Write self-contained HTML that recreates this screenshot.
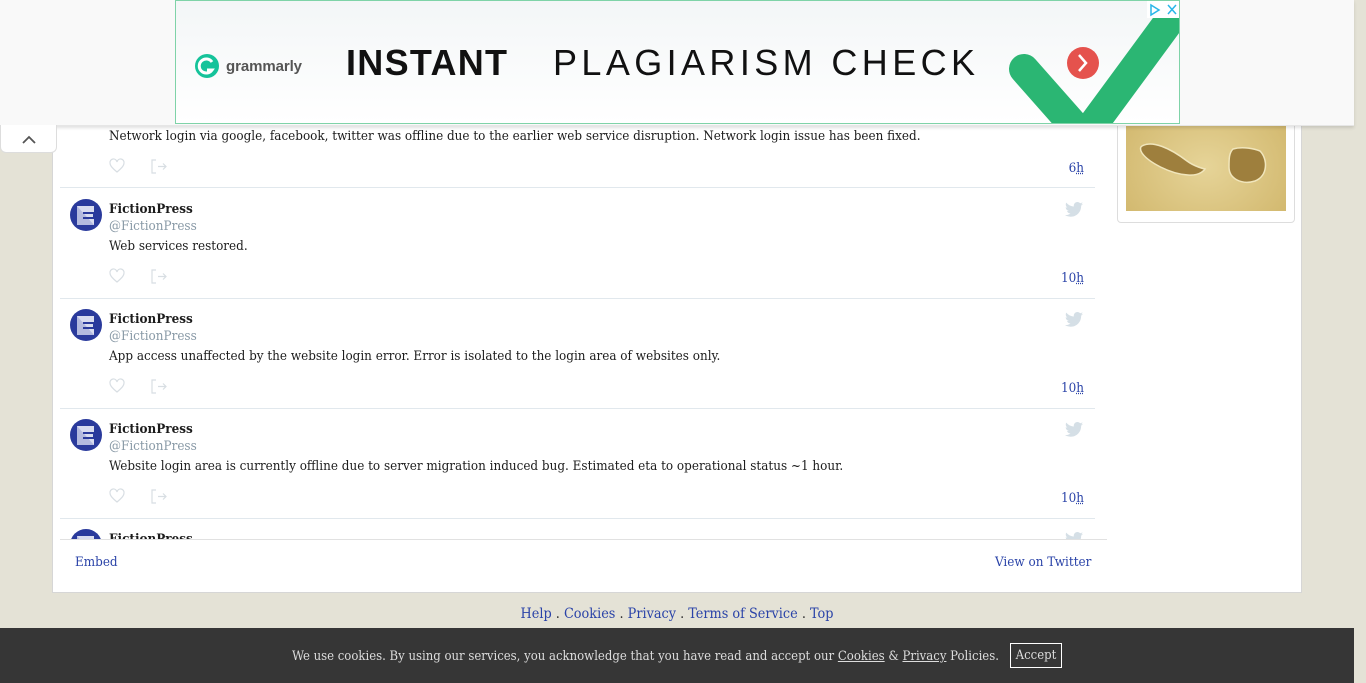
<!DOCTYPE html>
<html><head><meta charset="utf-8"><style>
*{box-sizing:border-box;margin:0;padding:0}
body{width:1366px;height:683px;overflow:hidden;background:#e4e2d6;font-family:"DejaVu Serif Condensed","DejaVu Serif",serif;font-size:13.35px;color:#1c1c1c;position:relative}
a{color:#2a43a8;text-decoration:none}
.panel{position:absolute;left:52px;top:0;width:1250px;height:593px;background:#fff;border:1px solid #d6d6d6;border-top:none}
.list{position:absolute;left:60px;top:0;width:1035px;height:539px;overflow:hidden}
.tw{position:absolute;left:0;width:1035px;height:110px;border-bottom:1px solid #e1e8ed}
.av{position:absolute;left:10px;top:10px;width:32px;height:32px}
.nm{position:absolute;left:49px;top:12px;font-weight:bold}
.hd{position:absolute;left:49px;top:30px;color:#8899a6}
.tx{position:absolute;left:49px;top:50px}
.ic{position:absolute;left:49px;top:79px}
.tm{position:absolute;right:11px;top:82px;color:#2a43a8}
.tm u{text-decoration:underline dotted}
.bird{position:absolute;right:12px;top:13px}
.sep{position:absolute;left:60px;top:539px;width:1047px;border-top:1px solid #e1e1e1}
.side{position:absolute;left:1117px;top:100px;width:178px;height:123px;border:1px solid #ddd;border-radius:0 0 4px 4px;background:#fff}
.img{position:absolute;left:8px;top:0;width:160px;height:110px;background:radial-gradient(ellipse at 50% 60%,#e6d498,#cfb468)}
.top{position:absolute;left:0;top:0;width:1354px;height:126px;background:#f9f9f9;box-shadow:0 2px 3px rgba(0,0,0,.12);border-bottom:1px solid #e6e6e6}
.ad{position:absolute;left:175px;top:0;width:1005px;height:124px;border:1px solid #7fd3a8;background:linear-gradient(#f3f6f7,#fff);overflow:hidden}
.tab{position:absolute;left:0;top:125px;width:57px;height:28px;background:#fff;border:1px solid #ddd;border-top:none;border-radius:0 0 6px 6px}
.foot{position:absolute;top:606px;left:0;width:1354px;text-align:center;font-size:14.3px;color:#333}
.ck{position:absolute;left:0;top:628px;width:1354px;height:55px;background:#363636;color:#ddd;font-size:13px}
</style></head><body>
<div class="panel"></div>
<div class="list">
<div class="tw" style="top:78px"><div class="tx" style="top:51px">Network login via google, facebook, twitter was offline due to the earlier web service disruption. Network login issue has been fixed.</div>
<div class="ic" style="top:80px"><svg width="70" height="16"><path d="M8 14 C2 9 1 7 1 5 a3.5 3.5 0 0 1 7-1 a3.5 3.5 0 0 1 7 1 c0 2-1 4-7 9z" fill="none" stroke="#d8dee3" stroke-width="1.2"/><path d="M47 2h-4v13h4M49 8.5h8M54 5.5l3 3-3 3" fill="none" stroke="#d8dee3" stroke-width="1.2"/></svg></div>
<div class="tm" style="top:83px">6<u>h</u></div></div>
</div>
<div class="list" id="l2"></div>
<div class="sep"></div>
<a style="position:absolute;left:75px;top:555px">Embed</a>
<a style="position:absolute;left:995px;top:555px">View on Twitter</a>
<div class="side"><div class="img"><svg width="160" height="110"><path d="M16 45c10-6 28 2 45 15 8 6 18 8 18 8s-4 7-17 6c-18-1-40-13-46-22-2-3-2-6 0-7z" fill="#9e7f3d" stroke="#f1e6bc" stroke-width="1.5"/><path d="M107 48c10-3 22 0 27 2 8 8 8 25-5 30-13 4-26-2-26-14 0-8 0-14 4-18z" fill="#9e7f3d" stroke="#f1e6bc" stroke-width="1.5"/><path d="M20 0c4 8 14 10 24 4l2-4zM120 0c6 4 14 6 20 0z" fill="#9e7f3d"/></svg></div></div>
<div class="top"><div class="ad">
<svg width="1005" height="124" style="position:absolute;left:0;top:0"><circle cx="31" cy="65" r="12" fill="#15c39a"/><path d="M36 61a7 7 0 1 0 0 8h-5" fill="none" stroke="#fff" stroke-width="3"/>
<text x="50" y="70" font-family="Liberation Sans" font-weight="bold" font-size="15" fill="#555" textLength="76">grammarly</text>
<text x="170" y="74" font-family="Liberation Sans" font-weight="bold" font-size="36" fill="#111" textLength="161">INSTANT</text>
<text x="377" y="74" font-family="Liberation Sans" font-size="36" fill="#111" textLength="422">PLAGIARISM CHECK</text>
<path d="M848 68l60 68 100-136" fill="none" stroke="#2bb673" stroke-width="30" stroke-linecap="round"/>
<circle cx="907" cy="62" r="16" fill="#e5524d"/><path d="M903 54l7 8-7 8" fill="none" stroke="#fff" stroke-width="2.5"/>
<rect x="971" y="0" width="34" height="17" fill="#fff"/>
<path d="M975 4l8 5-8 5z" fill="none" stroke="#29b6e8" stroke-width="1.5"/><path d="M992 4l8 9M1000 4l-8 9" stroke="#29b6e8" stroke-width="1.5"/></svg>
</div></div>
<div class="tab"><svg width="57" height="28"><path d="M22 18l6-6 6 6" fill="none" stroke="#555" stroke-width="1.8"/></svg></div>
<div class="foot"><a>Help</a> . <a>Cookies</a> . <a>Privacy</a> . <a>Terms of Service</a> . <a>Top</a></div>
<div class="ck"><span style="position:absolute;left:292px;top:21px">We use cookies. By using our services, you acknowledge that you have read and accept our <u>Cookies</u> &amp; <u>Privacy</u> Policies.</span>
<span style="position:absolute;left:1010px;top:15px;width:52px;height:25px;border:1px solid #fff;text-align:center;line-height:24px">Accept</span></div>
<script>
var T=["Web services restored.","App access unaffected by the website login error. Error is isolated to the login area of websites only.","Website login area is currently offline due to server migration induced bug. Estimated eta to operational status ~1 hour.",""];
var av='<svg class="av" viewBox="0 0 32 32"><circle cx="16" cy="16" r="16" fill="#2a3a9c"/><path d="M7 7h17v6h-11v2h10v3h-10v2h11v6h-17z" fill="#d9dcef"/><path d="M7 7l17 19h-17z" fill="#b4badf"/><rect x="13" y="13" width="10" height="2" fill="#2a3a9c"/><rect x="13" y="18" width="10" height="2" fill="#2a3a9c"/></svg>';
var bird='<svg class="bird" width="18" height="15" viewBox="0 0 24 20"><path d="M24 2.4c-.9.4-1.8.7-2.8.8 1-.6 1.8-1.6 2.2-2.7-1 .6-2 1-3.1 1.2C19.3.6 18 0 16.6 0c-2.7 0-4.9 2.2-4.9 4.9 0 .4 0 .8.1 1.1C7.7 5.8 4.1 3.9 1.7.9c-.4.7-.7 1.6-.7 2.5 0 1.7.9 3.2 2.2 4.1-.8 0-1.6-.2-2.2-.6v.1c0 2.4 1.7 4.4 3.9 4.8-.4.1-.8.2-1.3.2-.3 0-.6 0-.9-.1.6 2 2.4 3.4 4.6 3.4-1.7 1.3-3.8 2.1-6.1 2.1H0c2.2 1.4 4.8 2.2 7.5 2.2 9.1 0 14-7.5 14-14v-.6c1-.7 1.8-1.6 2.5-2.6z" fill="#d5dfe6"/></svg>';
var ic='<div class="ic"><svg width="70" height="16"><path d="M8 14 C2 9 1 7 1 5 a3.5 3.5 0 0 1 7-1 a3.5 3.5 0 0 1 7 1 c0 2-1 4-7 9z" fill="none" stroke="#d8dee3" stroke-width="1.2"/><path d="M47 2h-4v13h4M49 8.5h8M54 5.5l3 3-3 3" fill="none" stroke="#d8dee3" stroke-width="1.2"/></svg></div>';
var h='';for(var i=0;i<4;i++){h+='<div class="tw" style="top:'+(189+i*110)+'px;'+(i==3?'border:none':'')+'">'+av+'<div class="nm">FictionPress</div>'+bird+(i<3?'<div class="hd">@FictionPress</div><div class="tx">'+T[i]+'</div>'+ic+'<div class="tm">10<u>h</u></div>':'')+'</div>';}
document.getElementById('l2').innerHTML=h;
</script>
</body></html>
